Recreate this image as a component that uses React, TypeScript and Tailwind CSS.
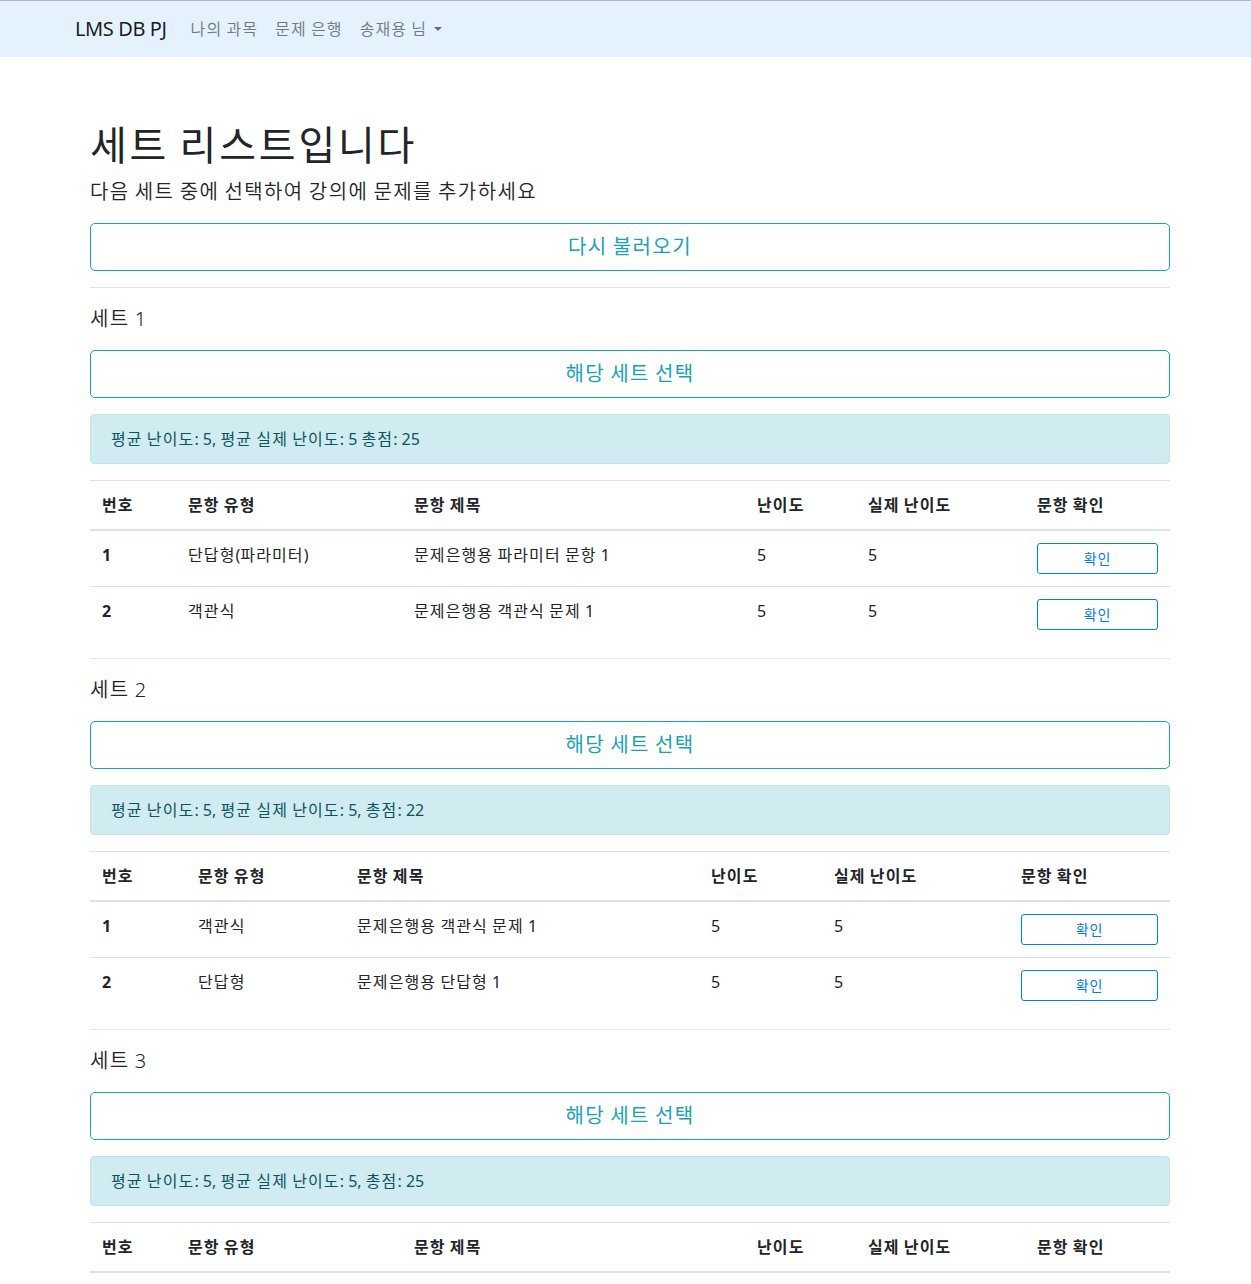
import React from "react";

type SetData = {
  title: string;
  summary: string;
  cols: string[];
  rows: string[][];
};

const COLS_A = ["w-[86px]", "w-[226px]", "w-[343px]", "w-[111px]", "w-[169px]", "w-[145px]"];
const COLS_B = ["w-[96px]", "w-[159px]", "w-[354px]", "w-[123px]", "w-[187px]", "w-[161px]"];

const SETS: SetData[] = [
  {
    title: "세트 1",
    summary: "평균 난이도: 5, 평균 실제 난이도: 5 총점: 25",
    cols: COLS_A,
    rows: [
      ["1", "단답형(파라미터)", "문제은행용 파라미터 문항 1", "5", "5"],
      ["2", "객관식", "문제은행용 객관식 문제 1", "5", "5"],
    ],
  },
  {
    title: "세트 2",
    summary: "평균 난이도: 5, 평균 실제 난이도: 5, 총점: 22",
    cols: COLS_B,
    rows: [
      ["1", "객관식", "문제은행용 객관식 문제 1", "5", "5"],
      ["2", "단답형", "문제은행용 단답형 1", "5", "5"],
    ],
  },
  {
    title: "세트 3",
    summary: "평균 난이도: 5, 평균 실제 난이도: 5, 총점: 25",
    cols: COLS_A,
    rows: [],
  },
];

const HEADERS = ["번호", "문항 유형", "문항 제목", "난이도", "실제 난이도", "문항 확인"];

/* Widen Hangul runs slightly so they take the same room as in the reference font. */
function K({ t }: { t: string }) {
  const parts = t.split(/([\uAC00-\uD7A3]+)/);
  return (
    <span>
      {parts.map((p, i) =>
        /[\uAC00-\uD7A3]/.test(p) ? (
          <span key={i} className="tracking-[0.07em]">
            {p}
          </span>
        ) : (
          <React.Fragment key={i}>{p}</React.Fragment>
        )
      )}
    </span>
  );
}

function BigButton({ label }: { label: string }) {
  return (
    <button
      type="button"
      className="block w-full h-[48px] rounded-[5px] border border-[#17a2b8] bg-white text-[20px] leading-[30px] text-[#17a2b8]"
    >
      <K t={label} />
    </button>
  );
}

function SetBlock({ data }: { data: SetData }) {
  return (
    <div>
      <hr className="my-4 border-0 border-t border-[rgba(0,0,0,0.1)]" />
      <p className="mb-4 text-[20px] leading-[30px] font-[350] text-[#212529]">
        <K t={data.title} />
      </p>
      <BigButton label="해당 세트 선택" />
      <div className="mt-4 mb-4 rounded-[4px] border border-[#bee5eb] bg-[#d1ecf1] px-5 py-3 text-[16px] leading-[24px] text-[#0c5460]">
        <K t={data.summary} />
      </div>
      <table className="w-full table-fixed border-collapse text-[16px] leading-[24px] text-[#212529] mb-4">
        <colgroup>
          {data.cols.map((c, i) => (
            <col key={i} className={c} />
          ))}
        </colgroup>
        <thead>
          <tr>
            {HEADERS.map((h) => (
              <th
                key={h}
                className="border-t border-b-2 border-t-[#dee2e6] border-b-[#dee2e6] p-3 text-left align-bottom font-bold"
              >
                <K t={h} />
              </th>
            ))}
          </tr>
        </thead>
        <tbody>
          {data.rows.map((r) => (
            <tr key={r[0]}>
              <th className="border-t border-[#dee2e6] p-3 text-left align-top font-bold">{r[0]}</th>
              <td className="border-t border-[#dee2e6] p-3 align-top">
                <K t={r[1]} />
              </td>
              <td className="border-t border-[#dee2e6] p-3 align-top">
                <K t={r[2]} />
              </td>
              <td className="border-t border-[#dee2e6] p-3 align-top">{r[3]}</td>
              <td className="border-t border-[#dee2e6] p-3 align-top">{r[4]}</td>
              <td className="border-t border-[#dee2e6] p-3 align-top">
                <button
                  type="button"
                  className="block w-full rounded-[3px] border border-[#007bff] bg-white px-2 py-1 text-[14px] leading-[21px] text-[#007bff]"
                >
                  <K t="확인" />
                </button>
              </td>
            </tr>
          ))}
        </tbody>
      </table>
    </div>
  );
}

export default function App() {
  return (
    <div className="min-h-screen bg-white font-['Noto_Sans','Noto_Sans_CJK_KR',sans-serif] text-[#212529]">
      <nav className="border-t border-[#b4b4b4] bg-[#e3f2fd] py-2">
        <div className="flex items-center pl-[75px]">
          <span className="mr-4 py-[5px] text-[20px] leading-[30px] tracking-[-0.4px] text-[rgba(0,0,0,0.9)]">LMS DB PJ</span>
          <div className="flex items-center text-[16px] leading-[24px] text-[rgba(0,0,0,0.5)]">
            <span className="px-2 py-2">
              <K t="나의 과목" />
            </span>
            <span className="px-2 py-2 ml-[1px]">
              <K t="문제 은행" />
            </span>
            <span className="px-2 py-2 ml-[1px] flex items-center">
              <K t="송재용 님" />
              <span className="ml-[7px] inline-block h-0 w-0 border-x-[4.8px] border-t-[4.8px] border-x-transparent border-t-[rgba(0,0,0,0.55)]" />
            </span>
          </div>
        </div>
      </nav>

      <main className="ml-[90px] w-[1080px] pt-[64px]">
        <h1 className="mb-2 text-[40px] leading-[48px] font-normal">
          <K t="세트 리스트입니다" />
        </h1>
        <p className="mb-4 text-[20px] leading-[30px] font-[350]">
          <K t="다음 세트 중에 선택하여 강의에 문제를 추가하세요" />
        </p>
        <BigButton label="다시 불러오기" />
        {SETS.map((s) => (
          <SetBlock key={s.title} data={s} />
        ))}
      </main>
    </div>
  );
}
